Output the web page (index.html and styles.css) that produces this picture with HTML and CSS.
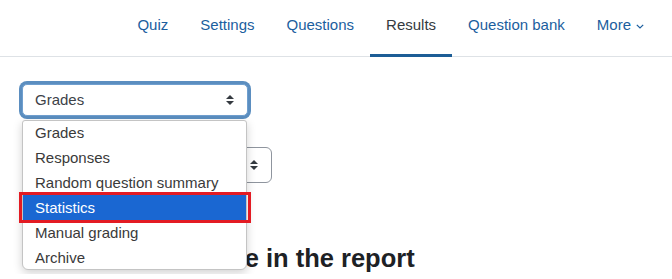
FILE: index.html
```html
<!DOCTYPE html>
<html lang="en">
<head>
<meta charset="utf-8">
<title>Results</title>
<link rel="stylesheet" href="styles.css">
</head>
<body>
<nav class="secnav">
  <a class="navlink" href="#">Quiz</a>
  <a class="navlink" href="#">Settings</a>
  <a class="navlink" href="#">Questions</a>
  <a class="navlink active" href="#">Results</a>
  <a class="navlink" href="#">Question bank</a>
  <a class="navlink" href="#">More<svg class="chev" width="8" height="5" viewBox="0 0 8 5"><polyline points="0.8,0.8 4,4 7.2,0.8" fill="none" stroke="#1b5e9e" stroke-width="1.2"/></svg></a>
</nav>
<main class="page">
  <div class="select focus">
    <span class="select-text">Grades</span>
    <svg class="carets" width="8" height="10" viewBox="0 0 4 5"><path fill="#343a40" d="M2 0L0 2h4zm0 5L0 3h4z"/></svg>
  </div>
  <div class="select second">
    <span class="select-text"></span>
    <svg class="carets" width="8" height="10" viewBox="0 0 4 5"><path fill="#343a40" d="M2 0L0 2h4zm0 5L0 3h4z"/></svg>
  </div>
  <h2 class="legend">What to include in the report</h2>

  <ul class="popup">
    <li class="opt">Grades</li>
    <li class="opt">Responses</li>
    <li class="opt">Random question summary</li>
    <li class="opt selected">Statistics</li>
    <li class="opt">Manual grading</li>
    <li class="opt">Archive</li>
  </ul>
  <div class="annot"></div>
</main>
</body>
</html>
```
FILE: styles.css
```css
* { box-sizing: border-box; }
html, body { margin: 0; padding: 0; background: #fff; }
body {
  font-family: "Liberation Sans", Arial, sans-serif;
  font-size: 15px;
  color: #1d2125;
}
.secnav {
  display: flex;
  justify-content: flex-end;
  height: 57px;
  padding-right: 12px;
  box-shadow: inset 0 -1px 0 #dee2e6;
}
.navlink {
  display: flex;
  align-items: flex-start;
  height: 57px;
  padding: 13.5px 16px 0;
  line-height: 22.5px;
  color: #1b5e9e;
  text-decoration: none;
  border-bottom: 3px solid transparent;
  white-space: nowrap;
}
.navlink.active {
  color: #343a40;
  border-bottom-color: #1c5d96;
}
.chev { margin: 10px 0 0 5px; }
.page {
  position: relative;
  padding: 27px 0 0 22px;
}
.select {
  position: relative;
  display: flex;
  align-items: center;
  height: 32px;
  width: 226px;
  padding: 0 12px 0 12px;
  border: 1px solid #8f959e;
  border-radius: 5px;
  background: #fff;
  color: #3d4248;
  line-height: 22px;
}
.select.focus {
  border-color: #6f9fcf;
  box-shadow: 0 0 0 3px #5b8ec0;
}
.select-text { flex: 1; white-space: nowrap; overflow: hidden; }
.carets { flex: none; margin-left: 8px; margin-right: 1px; }
.select.second {
  margin-top: 31px;
  height: 36px;
  width: 250px;
  border-radius: 6px;
}
.legend {
  margin: 60px 0 0 47px;
  font-size: 25.5px;
  font-weight: bold;
  line-height: 30.6px;
  color: #1d2125;
  white-space: nowrap;
}
.popup {
  position: absolute;
  left: 22px;
  top: 63px;
  width: 225px;
  height: 150px;
  margin: 0;
  padding: 0;
  list-style: none;
  background: #fff;
  border: 1px solid #c4c4c4;
  border-radius: 3px 3px 6px 6px;
  box-shadow: 0 3px 10px rgba(0, 0, 0, 0.18);
  overflow: hidden;
}
.opt {
  height: 25px;
  line-height: 25px;
  padding-left: 12px;
  color: #3a3a3a;
  white-space: nowrap;
}
.opt:first-child { height: 24px; line-height: 24px; }
.opt.selected {
  background: #1a67d2;
  color: #fff;
}
.annot {
  position: absolute;
  left: 19px;
  top: 135px;
  width: 232px;
  height: 31px;
  border: 3px solid #e31b23;
}
```
